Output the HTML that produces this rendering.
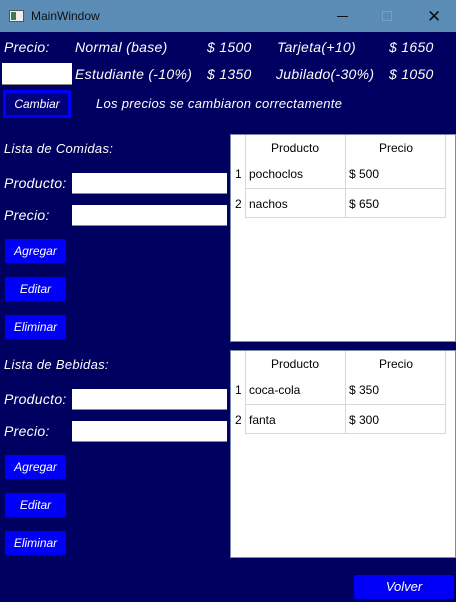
<!DOCTYPE html>
<html><head><meta charset="utf-8"><style>
*{margin:0;padding:0;box-sizing:border-box}
body{width:456px;height:602px;overflow:hidden;background:#000060;font-family:"Liberation Sans",sans-serif;position:relative}
.a{position:absolute;white-space:nowrap}
.h{color:#fff;font-style:italic;font-size:14px;line-height:18px;font-family:"Comic Sans MS","Liberation Sans",sans-serif;letter-spacing:0.3px}
.in{position:absolute;background:#fff;border-bottom:1px solid #888}
.btn{position:absolute;background:#0000f8;color:#fff;font-style:italic;font-size:12px;text-align:center;border-radius:2px}
.tb{position:absolute;background:#fff;border:1px solid #7a8aa8}
.c{position:absolute;font-size:12px;color:#000;line-height:16px}
.ln{position:absolute;background:#d8d8d8}
</style></head><body>
<div class="a" style="left:0;top:0;width:456px;height:32px;background:#5a8cb6"></div>
<div class="a" style="left:9px;top:10px;width:15px;height:12px;background:#eee;border:1px solid #555"></div>
<div class="a" style="left:11px;top:12px;width:5px;height:8px;background:#3a7a5a"></div>
<div class="a" style="left:31px;top:8px;font-size:12px;color:#111;line-height:16px">MainWindow</div>
<div class="a" style="left:337px;top:16px;width:11px;height:1px;background:#111"></div>
<div class="a" style="left:382px;top:11px;width:10px;height:10px;border:1px solid #7a9ec0"></div>
<div class="a" style="left:427px;top:9px;font-size:17px;color:#111;line-height:16px">✕</div>

<div class="a h" style="left:4px;top:38px">Precio:</div>
<div class="a h" style="left:75px;top:38px">Normal (base)</div>
<div class="a h" style="left:207px;top:38px">$ 1500</div>
<div class="a h" style="left:277px;top:38px">Tarjeta(+10)</div>
<div class="a h" style="left:389px;top:38px">$ 1650</div>
<div class="in" style="left:2px;top:63px;width:70px;height:22px"></div>
<div class="a h" style="left:75px;top:65px">Estudiante (-10%)</div>
<div class="a h" style="left:207px;top:65px">$ 1350</div>
<div class="a h" style="left:276px;top:65px">Jubilado(-30%)</div>
<div class="a h" style="left:389px;top:65px">$ 1050</div>
<div class="btn" style="left:3px;top:90px;width:68px;height:28px;background:#00007a;border:3px solid #0000ff;line-height:22px;font-size:12px">Cambiar</div>
<div class="a h" style="left:96px;top:95px;font-size:13px">Los precios se cambiaron correctamente</div>

<div class="a h" style="left:4px;top:140px;font-size:13px">Lista de Comidas:</div>
<div class="a h" style="left:4px;top:174px">Producto:</div>
<div class="in" style="left:72px;top:173px;width:155px;height:21px"></div>
<div class="a h" style="left:4px;top:206px">Precio:</div>
<div class="in" style="left:72px;top:205px;width:155px;height:21px"></div>
<div class="btn" style="left:5px;top:239px;width:61px;height:24px;line-height:24px">Agregar</div>
<div class="btn" style="left:5px;top:277px;width:61px;height:24px;line-height:24px">Editar</div>
<div class="btn" style="left:5px;top:315px;width:61px;height:24px;line-height:24px">Eliminar</div>

<div class="tb" style="left:230px;top:134px;width:226px;height:208px"></div>
<div class="ln" style="left:245px;top:135px;width:1px;height:83px"></div>
<div class="ln" style="left:345px;top:135px;width:1px;height:83px"></div>
<div class="ln" style="left:445px;top:135px;width:1px;height:83px"></div>
<div class="ln" style="left:245px;top:188px;width:201px;height:1px"></div>
<div class="ln" style="left:245px;top:217px;width:201px;height:1px"></div>
<div class="c" style="left:271px;top:140px">Producto</div>
<div class="c" style="left:379px;top:140px">Precio</div>
<div class="c" style="left:235px;top:166px">1</div>
<div class="c" style="left:249px;top:166px">pochoclos</div>
<div class="c" style="left:349px;top:166px">$ 500</div>
<div class="c" style="left:235px;top:196px">2</div>
<div class="c" style="left:249px;top:196px">nachos</div>
<div class="c" style="left:349px;top:196px">$ 650</div>

<div class="a h" style="left:4px;top:356px;font-size:13px">Lista de Bebidas:</div>
<div class="a h" style="left:4px;top:390px">Producto:</div>
<div class="in" style="left:72px;top:389px;width:155px;height:21px"></div>
<div class="a h" style="left:4px;top:422px">Precio:</div>
<div class="in" style="left:72px;top:421px;width:155px;height:21px"></div>
<div class="btn" style="left:5px;top:455px;width:61px;height:24px;line-height:24px">Agregar</div>
<div class="btn" style="left:5px;top:493px;width:61px;height:24px;line-height:24px">Editar</div>
<div class="btn" style="left:5px;top:531px;width:61px;height:24px;line-height:24px">Eliminar</div>

<div class="tb" style="left:230px;top:350px;width:226px;height:208px"></div>
<div class="ln" style="left:245px;top:351px;width:1px;height:83px"></div>
<div class="ln" style="left:345px;top:351px;width:1px;height:83px"></div>
<div class="ln" style="left:445px;top:351px;width:1px;height:83px"></div>
<div class="ln" style="left:245px;top:404px;width:201px;height:1px"></div>
<div class="ln" style="left:245px;top:433px;width:201px;height:1px"></div>
<div class="c" style="left:271px;top:356px">Producto</div>
<div class="c" style="left:379px;top:356px">Precio</div>
<div class="c" style="left:235px;top:382px">1</div>
<div class="c" style="left:249px;top:382px">coca-cola</div>
<div class="c" style="left:349px;top:382px">$ 350</div>
<div class="c" style="left:235px;top:412px">2</div>
<div class="c" style="left:249px;top:412px">fanta</div>
<div class="c" style="left:349px;top:412px">$ 300</div>

<div class="btn" style="left:354px;top:575px;width:100px;height:24px;line-height:24px;font-size:13px">Volver</div>
</body></html>
